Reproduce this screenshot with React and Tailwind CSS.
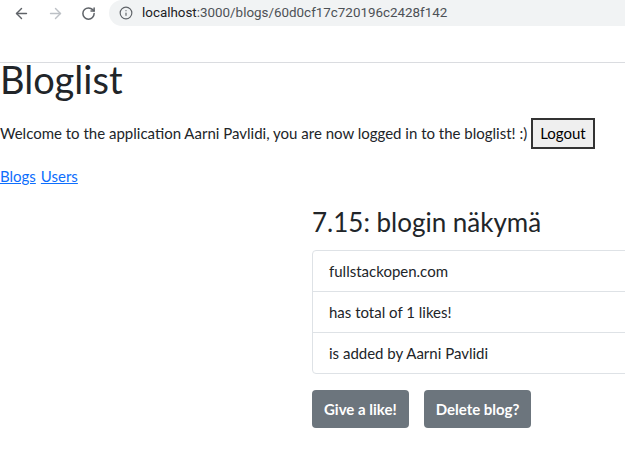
import { ArrowLeft, ArrowRight, RotateCw, Info } from "lucide-react";

function BrowserBar() {
  return (
    <div className="h-[63px] border-b border-[#dadce0] bg-white flex items-start">
      <div className="flex items-center h-[26px] pl-[13px] gap-[17px] text-[#5f6368]">
        <ArrowLeft size={17} strokeWidth={2} />
        <ArrowRight size={17} strokeWidth={2} className="text-[#bdc1c6]" />
        <RotateCw size={15} strokeWidth={2.4} />
      </div>
      <div className="ml-[13px] flex-1 h-[26px] bg-[#f1f3f4] rounded-l-full flex items-center pl-[10px] gap-[9px]">
        <Info size={14} strokeWidth={2} className="text-[#5f6368]" />
        <span className="text-[13.4px] text-[#202124] font-['Roboto',sans-serif]">
          localhost<span className="text-[#4d5156]">:3000/blogs/60d0cf17c720196c2428f142</span>
        </span>
      </div>
    </div>
  );
}

export default function App() {
  const rows = ["fullstackopen.com", "has total of 1 likes!", "is added by Aarni Pavlidi"];

  return (
    <div className="min-h-[469px] overflow-hidden bg-white text-[#212529] font-['Lato',sans-serif]">
      <BrowserBar />
      <h1 className="text-[38px] leading-none -mt-[3px]">Bloglist</h1>
      <div className="flex items-center gap-[4px] mt-[20px] text-[15px] whitespace-nowrap">
        <span>Welcome to the application Aarni Pavlidi, you are now logged in to the bloglist! :)</span>
        <button className="h-[31px] px-[7px] bg-[#efefef] border-2 border-[#333] text-[15px] text-black">
          Logout
        </button>
      </div>
      <div className="flex gap-[5px] mt-[15px] text-[15px] leading-6">
        <a href="#" className="text-[#0d6efd] underline">Blogs</a>
        <a href="#" className="text-[#0d6efd] underline">Users</a>
      </div>
      <div className="ml-[312px] mt-[18px]">
        <h2 className="text-[26px] leading-[32px]">7.15: blogin näkymä</h2>
        <ul className="mt-[12px] border border-[#dee2e6] rounded-l-[4px] w-[400px]">
          {rows.map((r, i) => (
            <li
              key={i}
              className={
                "px-4 py-2 text-[15px] leading-6 " +
                (i > 0 ? "border-t border-[#dee2e6]" : "")
              }
            >
              {r}
            </li>
          ))}
        </ul>
        <div className="flex gap-[15px] mt-[16px]">
          <button className="h-[38px] px-3 rounded-[4px] bg-[#6c757d] text-white text-[15px] font-bold">
            Give a like!
          </button>
          <button className="h-[38px] px-3 rounded-[4px] bg-[#6c757d] text-white text-[15px] font-bold">
            Delete blog?
          </button>
        </div>
      </div>
    </div>
  );
}
